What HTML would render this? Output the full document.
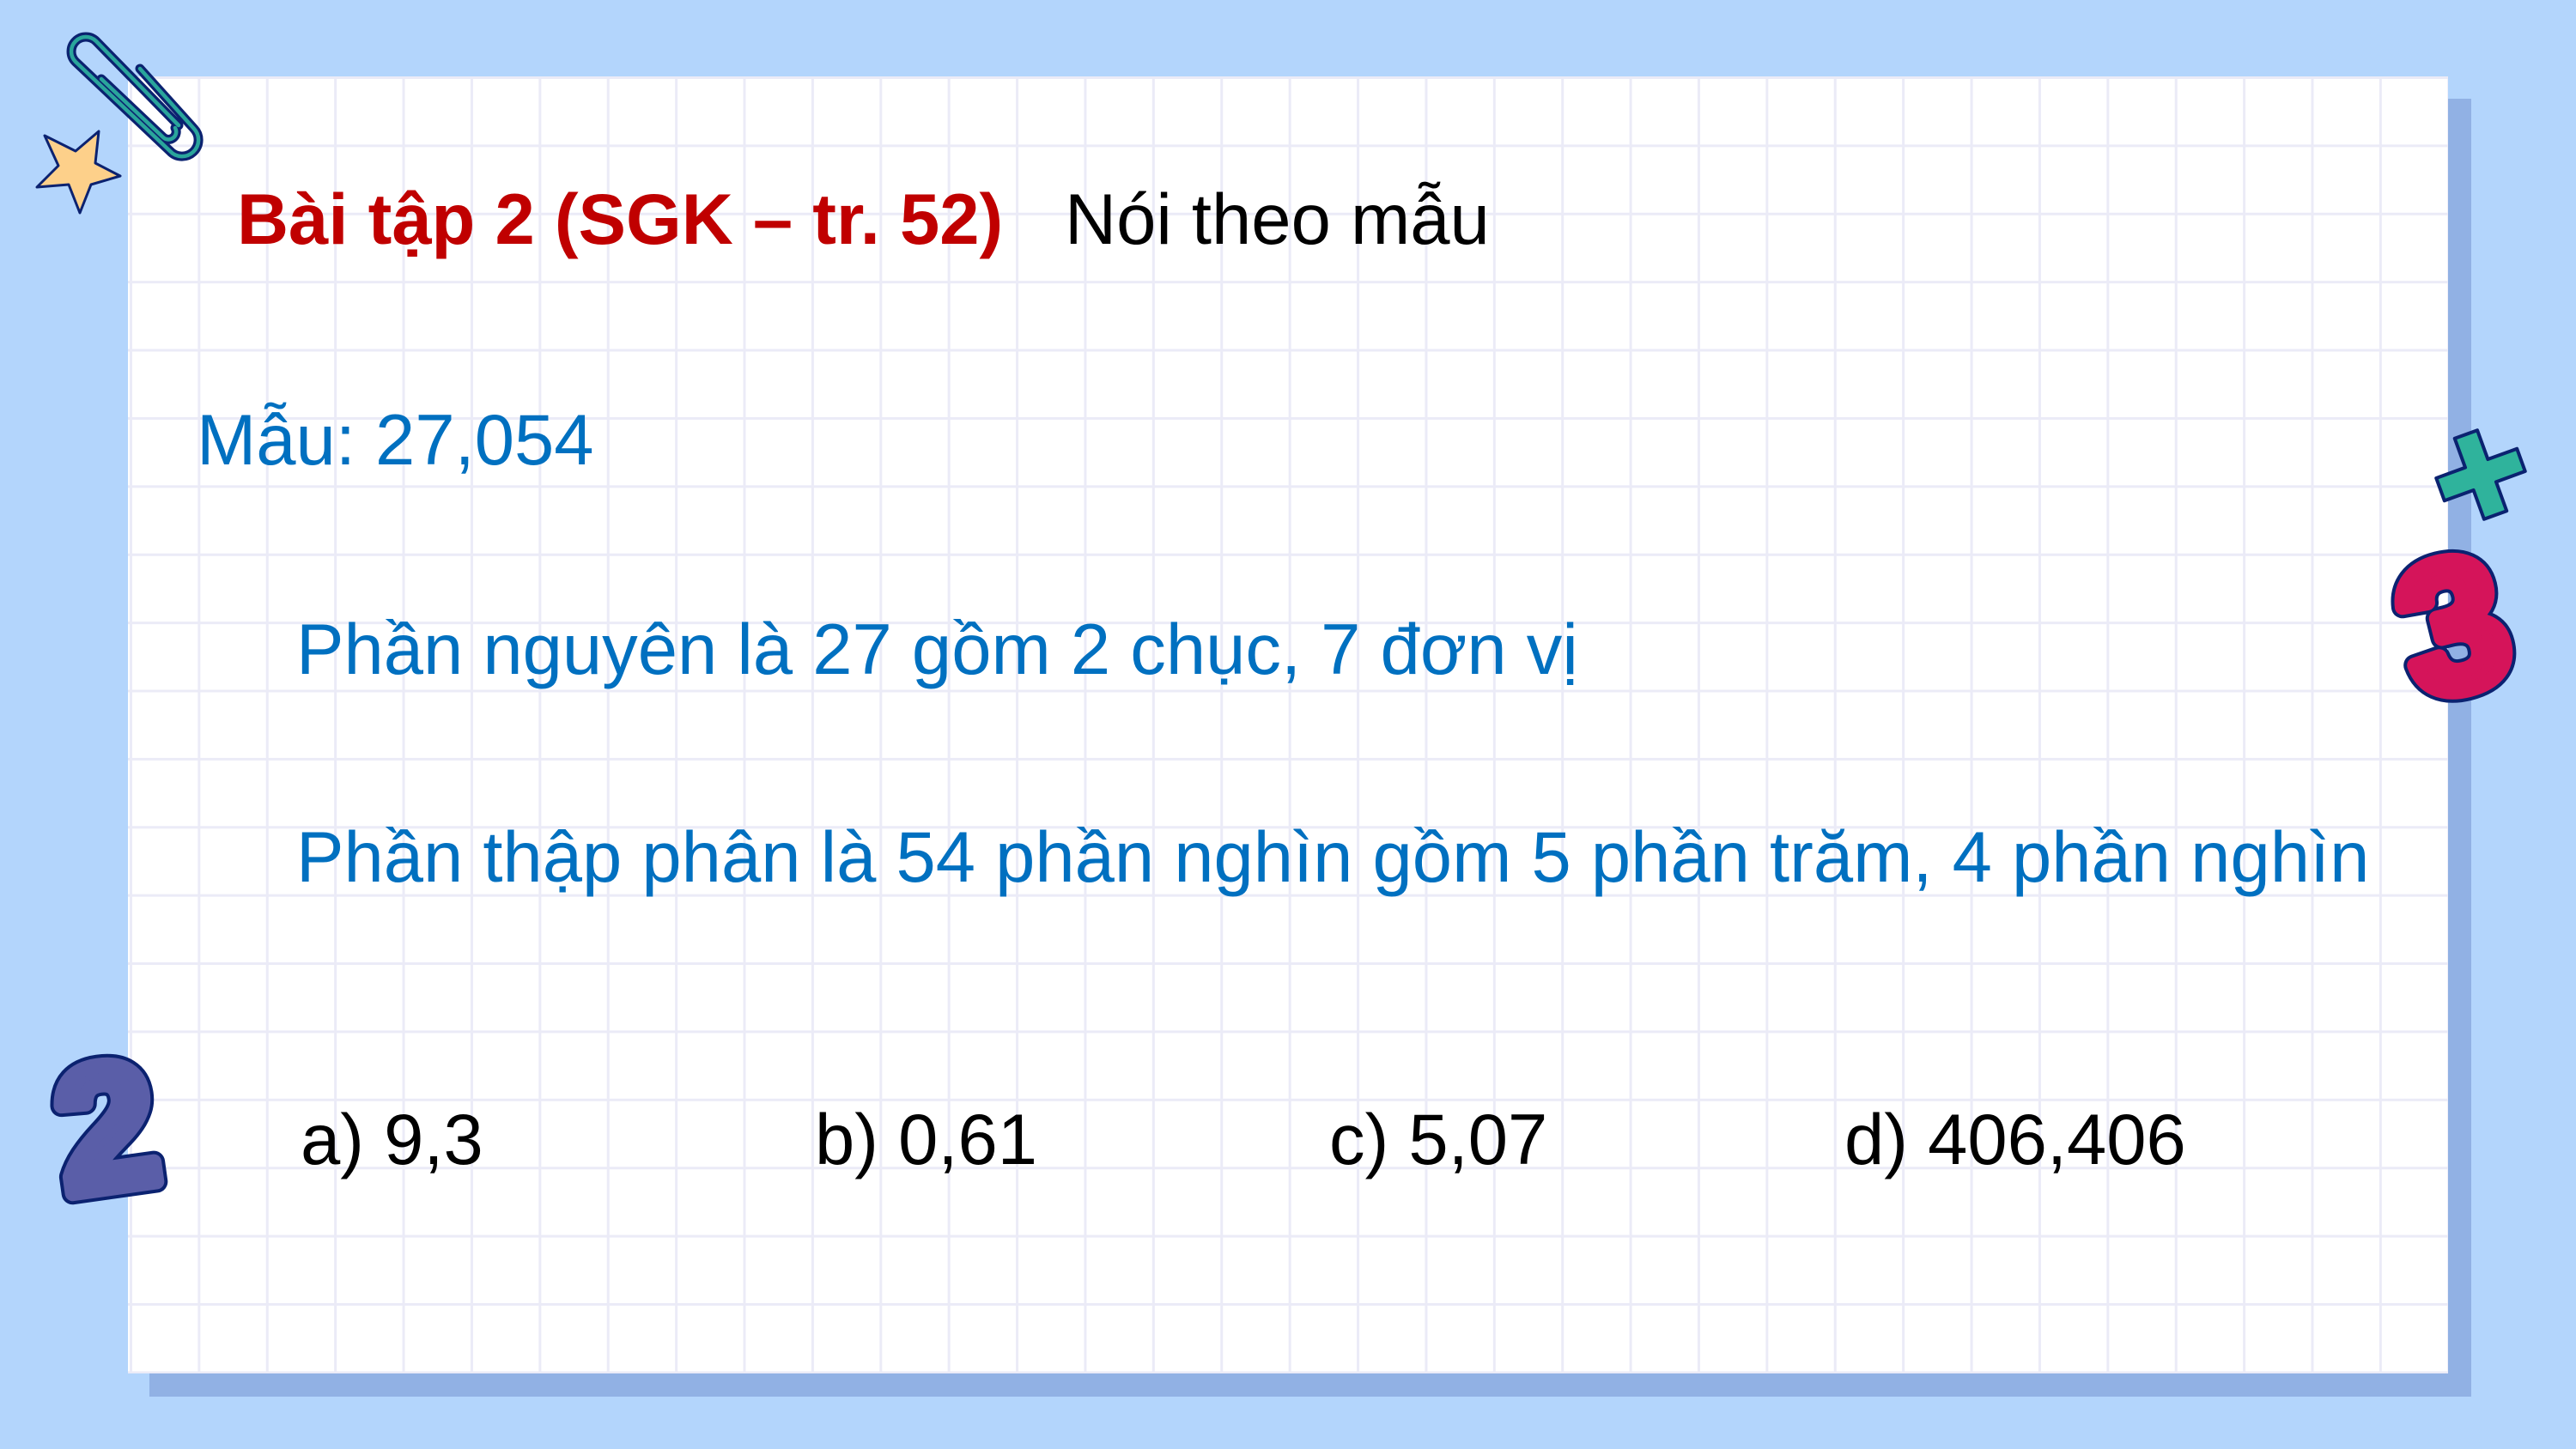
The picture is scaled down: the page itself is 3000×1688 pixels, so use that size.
<!DOCTYPE html>
<html><head><meta charset="utf-8"><style>
html,body{margin:0;padding:0}
body{width:3000px;height:1688px;background:#b3d5fc;position:relative;overflow:hidden;font-family:"Liberation Sans",Arial,sans-serif}
.shadow{position:absolute;left:174px;top:115px;width:2704px;height:1512px;background:#91b1e4}
.card{position:absolute;left:149px;top:89px;width:2702px;height:1511px;background-color:#fff;
background-image:linear-gradient(to right,#ebebf7 3px,transparent 3px),linear-gradient(to bottom,#ebebf7 3px,transparent 3px);
background-size:79.4px 79.4px;background-position:2px 0px}
.t{position:absolute;font-size:83.2px;line-height:1;white-space:nowrap}
.blue{color:#0070c0}
</style></head><body>
<div class="shadow"></div>
<div class="card"></div>

<div class="t" style="left:276px;top:214px;color:#c00000;font-weight:bold">Bài tập 2 (SGK – tr. 52)</div>
<div class="t" style="left:1240px;top:214px;color:#000">Nói theo mẫu</div>
<div class="t blue" style="left:229px;top:471px">Mẫu: 27,054</div>
<div class="t blue" style="left:345px;top:715px">Phần nguyên là 27 gồm 2 chục, 7 đơn vị</div>
<div class="t blue" style="left:345px;top:957px">Phần thập phân là 54 phần nghìn gồm 5 phần trăm, 4 phần nghìn</div>
<div class="t" style="left:350px;top:1286px">a) 9,3</div>
<div class="t" style="left:949px;top:1286px">b) 0,61</div>
<div class="t" style="left:1548px;top:1286px">c) 5,07</div>
<div class="t" style="left:2148px;top:1286px">d) 406,406</div>

<svg width="3000" height="1688" style="position:absolute;left:0;top:0" xmlns="http://www.w3.org/2000/svg">
  <g fill="none" stroke-linecap="round" stroke-linejoin="round">
    <path d="M163,80 L226,150 A18,18 0 0 1 198,176 L88,72 A15,15 0 0 1 112,48 L208,146 M118,92 L190,160 A9,9 0 0 0 204,149" stroke="#0b2270" stroke-width="11"/>
    <path d="M163,80 L226,150 A18,18 0 0 1 198,176 L88,72 A15,15 0 0 1 112,48 L208,146 M118,92 L190,160 A9,9 0 0 0 204,149" stroke="#2aa59b" stroke-width="4.5"/>
  </g>
  <path d="M52,158 L88,176 L115,153 L111,190 L140,205 L106,215 L93,248 L80,215 L43,218 L68,193 Z" fill="#fdd08a" stroke="#0b2270" stroke-width="3" stroke-linejoin="round"/>
  <g transform="translate(2889,553) rotate(-20)">
    <path d="M-14,-50 H14 V-14 H50 V14 H14 V50 H-14 V14 H-50 V-14 H-14 Z" fill="#2fb39c" stroke="#0b2270" stroke-width="4" stroke-linejoin="round"/>
  </g>
  <g transform="translate(2857,728) rotate(-14)" font-family="Liberation Sans" font-weight="bold" font-size="215" text-anchor="middle" stroke-linejoin="round">
    <text x="0" y="75" fill="#0b2270" stroke="#0b2270" stroke-width="26">3</text>
    <text x="0" y="75" fill="#d5145a" stroke="#d5145a" stroke-width="18">3</text>
  </g>
  <g transform="translate(124,1312) rotate(-8)" font-family="Liberation Sans" font-weight="bold" font-size="205" text-anchor="middle" stroke-linejoin="round">
    <text x="0" y="72" fill="#0b2270" stroke="#0b2270" stroke-width="26">2</text>
    <text x="0" y="72" fill="#5a5ea8" stroke="#5a5ea8" stroke-width="18">2</text>
  </g>
</svg>
</body></html>
